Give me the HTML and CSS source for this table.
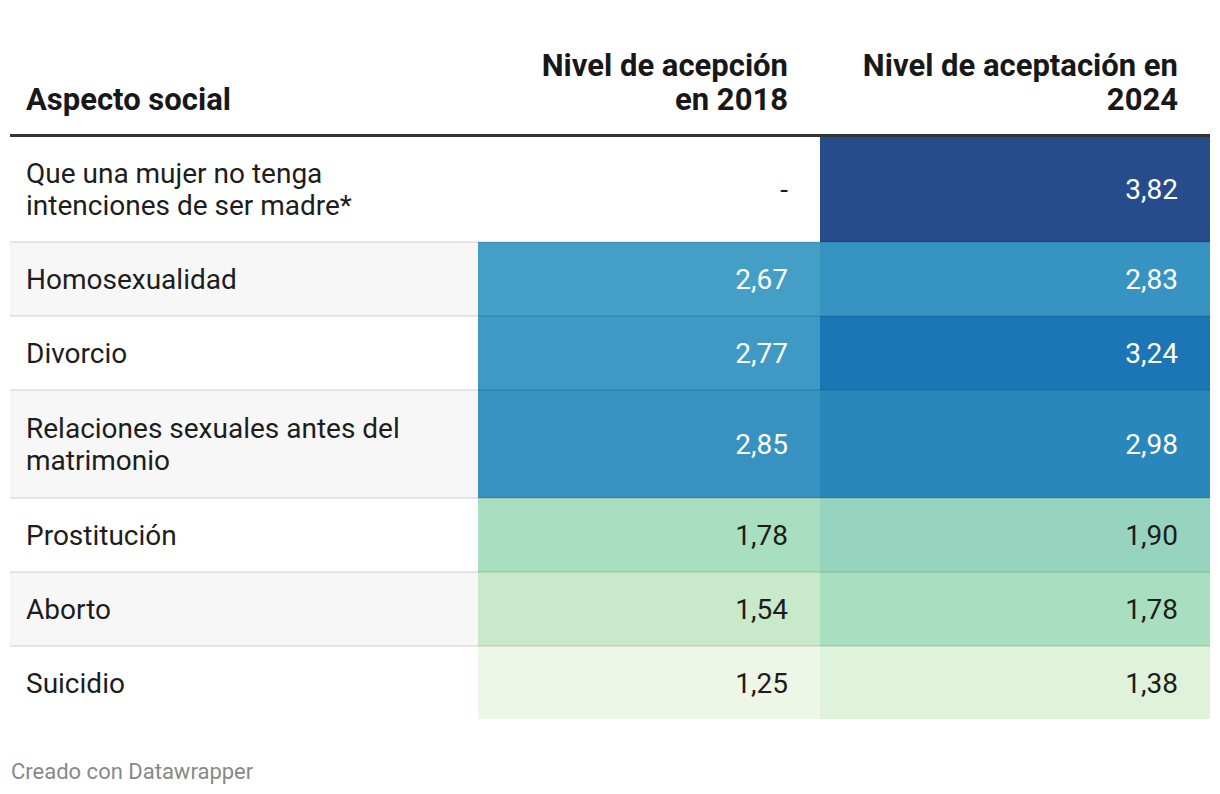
FILE: index.html
```html
<!DOCTYPE html>
<html lang="es">
<head>
<meta charset="utf-8">
<title>Aspecto social</title>
<link rel="stylesheet" href="styles.css">
</head>
<body>
<div class="chart">
  <table class="dw-table">
    <colgroup>
      <col class="c-label">
      <col class="c-2018">
      <col class="c-2024">
    </colgroup>
    <thead>
      <tr>
        <th class="label">Aspecto social</th>
        <th class="num">Nivel de acepción en 2018</th>
        <th class="num">Nivel de aceptación en 2024</th>
      </tr>
    </thead>
    <tbody>
      <tr>
        <td class="label">Que una mujer no tenga intenciones de ser madre*</td>
        <td class="num empty">-</td>
        <td class="num v382">3,82</td>
      </tr>
      <tr class="alt">
        <td class="label">Homosexualidad</td>
        <td class="num v267">2,67</td>
        <td class="num v283">2,83</td>
      </tr>
      <tr>
        <td class="label">Divorcio</td>
        <td class="num v277">2,77</td>
        <td class="num v324">3,24</td>
      </tr>
      <tr class="alt">
        <td class="label two">Relaciones sexuales antes del matrimonio</td>
        <td class="num v285">2,85</td>
        <td class="num v298">2,98</td>
      </tr>
      <tr>
        <td class="label">Prostitución</td>
        <td class="num v178">1,78</td>
        <td class="num v190">1,90</td>
      </tr>
      <tr class="alt">
        <td class="label">Aborto</td>
        <td class="num v154">1,54</td>
        <td class="num v178">1,78</td>
      </tr>
      <tr class="last">
        <td class="label">Suicidio</td>
        <td class="num v125">1,25</td>
        <td class="num v138">1,38</td>
      </tr>
    </tbody>
  </table>
  <footer class="credit">Creado con Datawrapper</footer>
</div>
</body>
</html>
```
FILE: styles.css
```css
html, body {
  margin: 0;
  padding: 0;
  background: #ffffff;
}

body {
  font-family: Roboto, "Noto Sans", "Liberation Sans", sans-serif;
  color: #1d1d1d;
}

.chart {
  padding: 39px 10px 0 10px;
}

.dw-table {
  width: 1200px;
  border-collapse: collapse;
  table-layout: fixed;
}

.c-label { width: 468px; }
.c-2018 { width: 342px; }
.c-2024 { width: 390px; }

.dw-table th {
  font-size: 31px;
  font-weight: 700;
  line-height: 34px;
  vertical-align: bottom;
  padding: 10px 32px 17px 16px;
  border-bottom: 3px solid #333333;
  color: #181818;
}

.dw-table th.label { text-align: left; }
.dw-table th.num { text-align: right; padding-left: 36px; }

.dw-table td {
  font-size: 28px;
  line-height: 32px;
  padding: 21px 32px 19px 16px;
  border-bottom: 2px solid rgba(0, 0, 0, 0.085);
  vertical-align: middle;
}

.dw-table td.two { padding-top: 22px; padding-bottom: 20px; }

.dw-table tr.last td { border-bottom: none; }

.dw-table td.label { text-align: left; }
.dw-table td.num { text-align: right; }

.dw-table tr.alt td.label { background: #f7f7f7; }

.v382 { background: #264c8c; color: #ffffff; }
.v267 { background: #449fc7; color: #ffffff; }
.v283 { background: #3793c2; color: #ffffff; }
.v277 { background: #3e99c5; color: #ffffff; }
.v324 { background: #1c75b5; color: #ffffff; }
.v285 { background: #3791c1; color: #ffffff; }
.v298 { background: #2987bc; color: #ffffff; }
.v178 { background: #a8dfc0; }
.v190 { background: #96d4c0; }
.v154 { background: #c9e9cb; }
.v125 { background: #eef7e7; }
.v138 { background: #dff2da; }

.credit {
  margin-top: 41px;
  padding-left: 1px;
  font-size: 22px;
  line-height: 24px;
  color: #888888;
}
```
